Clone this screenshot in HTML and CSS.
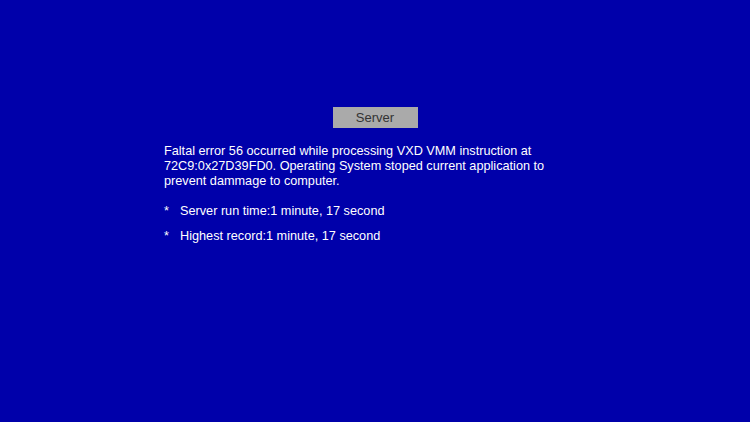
FILE: index.html
```html
<!DOCTYPE html>
<html>
<head>
<meta charset="utf-8">
<link rel="stylesheet" href="styles.css">
</head>
<body>
<div class="screen">
  <div class="panel">
    <div class="title-row"><span class="title">Server</span></div>
    <p class="message">Faltal error 56 occurred while processing VXD VMM instruction at 72C9:0x27D39FD0. Operating System stoped current application to prevent dammage to computer.</p>
    <ul class="stats">
      <li><span class="star">*</span>Server run time:1 minute, 17 second</li>
      <li><span class="star">*</span>Highest record:1 minute, 17 second</li>
    </ul>
  </div>
</div>
</body>
</html>
```
FILE: styles.css
```css
html, body {
  margin: 0;
  padding: 0;
  background: #0000aa;
}
.screen {
  width: 750px;
  height: 422px;
  background: #0000aa;
  display: flex;
  justify-content: center;
  font-family: "Liberation Sans", Arial, sans-serif;
  font-size: 12.7px;
  color: #ffffff;
}
.panel {
  width: 422px;
  padding-top: 107px;
}
.title-row {
  display: flex;
  justify-content: center;
}
.title {
  display: block;
  width: 85px;
  height: 21px;
  line-height: 21px;
  text-align: center;
  background: #aaaaaa;
  color: #333333;
  font-size: 13px;
}
.message {
  margin: 16px 0 0 0;
  max-width: 400px;
  line-height: 15px;
}
.stats {
  list-style: none;
  margin: 10px 0 0 0;
  padding: 0;
}
.stats li {
  height: 25px;
  line-height: 25px;
  display: flex;
}
.star {
  width: 16px;
}
```
